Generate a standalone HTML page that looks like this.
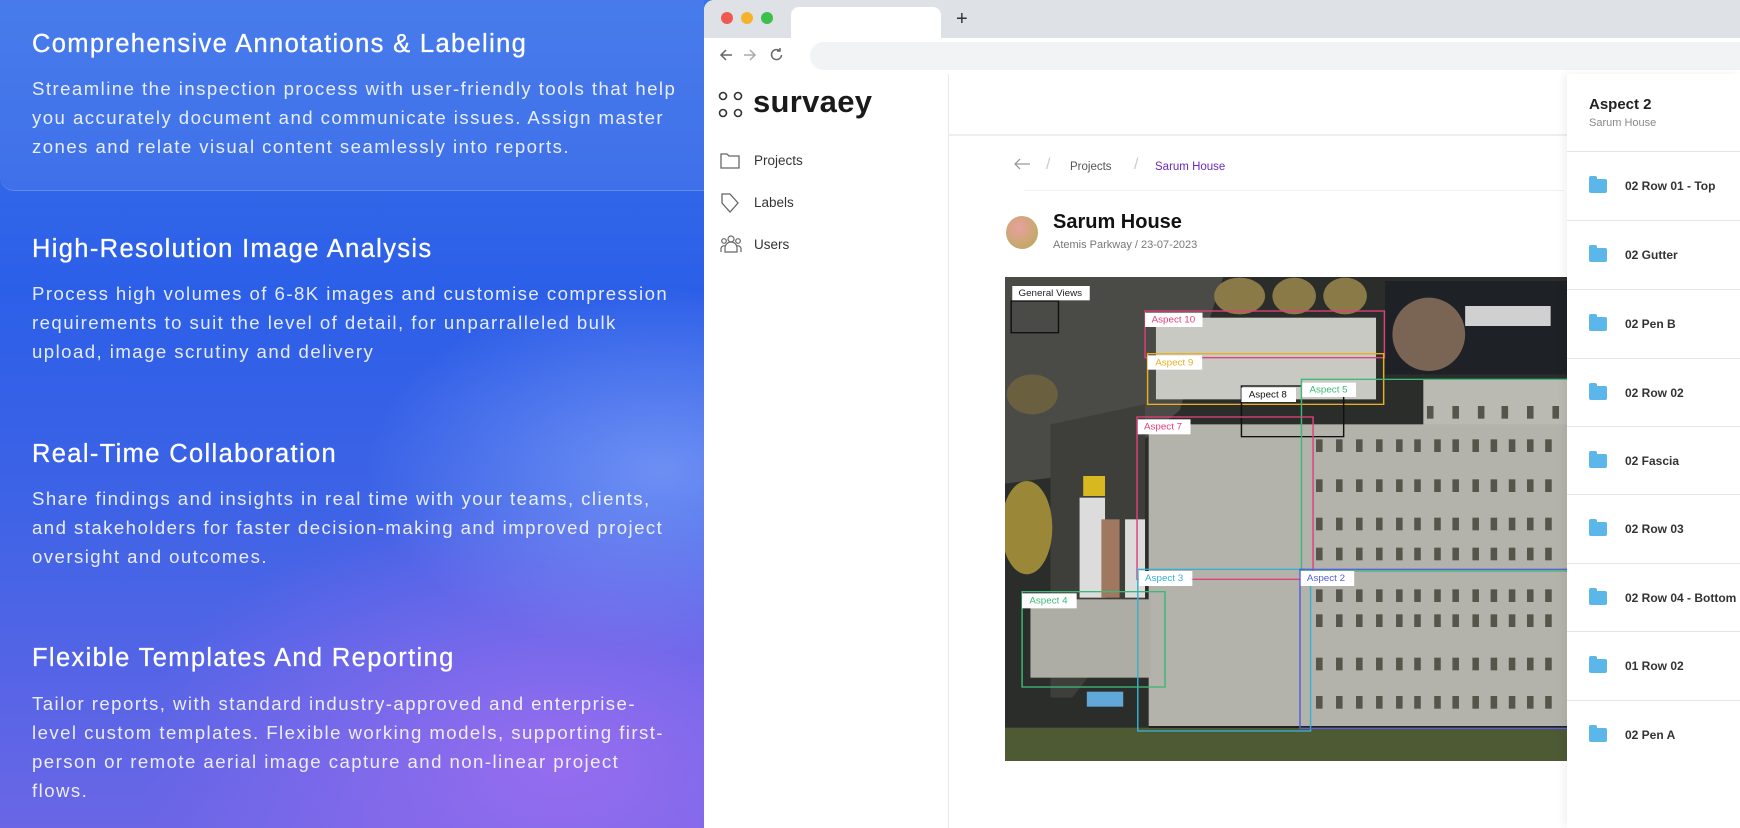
<!DOCTYPE html>
<html><head><meta charset="utf-8"><style>
*{margin:0;padding:0;box-sizing:border-box}
body{width:1740px;height:828px;overflow:hidden;position:relative;font-family:"Liberation Sans",sans-serif;background:#2d5fe6}
.left{position:absolute;left:0;top:0;width:720px;height:828px;
background:radial-gradient(ellipse 420px 260px at 660px 470px,rgba(150,180,255,.55),transparent 70%),
radial-gradient(ellipse 600px 380px at 560px 760px,rgba(160,110,240,.85),transparent 70%),
linear-gradient(180deg,#3a72ea 0%,#2c5fe8 35%,#3d63e6 60%,#6a66e6 100%)}
.card{position:absolute;left:0;top:0;width:704px;height:191px;background:rgba(255,255,255,.07);border-bottom:1px solid rgba(255,255,255,.18);border-bottom-left-radius:14px}
h2{position:absolute;left:32px;color:#fff;font-size:25.5px;font-weight:500;letter-spacing:1.35px;-webkit-text-stroke:.3px #fff}
p.b{position:absolute;left:32px;width:645px;color:rgba(255,255,255,.88);font-size:18.6px;line-height:29px;letter-spacing:1.45px}
.br{position:absolute;left:704px;top:0;width:1036px;height:828px;background:#fff;border-top-left-radius:10px;overflow:hidden}
.tabbar{position:absolute;left:0;top:0;right:0;height:38px;background:#dee1e6}
.tab{position:absolute;left:87px;top:7px;width:150px;height:34px;background:#fff;border-radius:8px 8px 0 0}
.dot{position:absolute;top:12px;width:12px;height:12px;border-radius:50%}
.addr{position:absolute;left:106px;top:42px;right:0;height:28px;background:#f1f3f4;border-radius:14px 0 0 14px}
.side{position:absolute;left:0;top:74px;width:245px;bottom:0;border-right:1px solid #e8e8e8}
.nav{position:absolute;left:50px;font-size:13.5px;color:#333}
.hdr{position:absolute;left:245px;top:74px;width:618px;height:62px;border-bottom:2px solid #eee}
.rp{position:absolute;left:863px;top:74px;width:173px;bottom:0;background:#fff;box-shadow:-3px 0 8px rgba(0,0,0,.06)}
.row{position:absolute;left:0;width:173px;height:69px;border-top:1px solid #e6e6e6;font-size:12px;font-weight:bold;color:#333}
.row span{position:absolute;left:58px;top:27px}
.fold{position:absolute;left:22px;top:27px;width:18px;height:14px;background:#5bb6ea;border-radius:2px}
.fold:before{content:"";position:absolute;left:0;top:-3px;width:8px;height:4px;background:#5bb6ea;border-radius:2px 2px 0 0}
</style></head><body>
<div class="left"></div>
<div class="card"></div>
<h2 style="top:30px">Comprehensive Annotations &amp; Labeling</h2>
<p class="b" style="top:74px">Streamline the inspection process with user-friendly tools that help you accurately document and communicate issues. Assign master zones and relate visual content seamlessly into reports.</p>
<h2 style="top:235px">High-Resolution Image Analysis</h2>
<p class="b" style="top:279px">Process high volumes of 6-8K images and customise compression requirements to suit the level of detail, for unparralleled bulk upload, image scrutiny and delivery</p>
<h2 style="top:440px">Real-Time Collaboration</h2>
<p class="b" style="top:484px">Share findings and insights in real time with your teams, clients, and stakeholders for faster decision-making and improved project oversight and outcomes.</p>
<h2 style="top:644px">Flexible Templates And Reporting</h2>
<p class="b" style="top:689px">Tailor reports, with standard industry-approved and enterprise-level custom templates. Flexible working models, supporting first-person or remote aerial image capture and non-linear project flows.</p>

<div class="br">
 <div class="tabbar"></div>
 <div class="dot" style="left:17px;background:#ee5a52"></div>
 <div class="dot" style="left:37px;background:#f4b32c"></div>
 <div class="dot" style="left:57px;background:#3cc04b"></div>
 <div class="tab"></div>
 <div style="position:absolute;left:252px;top:8px;font-size:20px;color:#333">+</div>
 <svg style="position:absolute;left:14px;top:46px" width="70" height="18" viewBox="0 0 70 18" fill="none" stroke="#666" stroke-width="1.5"><path d="M14 9H3M8 4L3 9l5 5"/><path d="M26 9h11M32 4l5 5-5 5" stroke="#aaa"/><path d="M62 5a5 5 0 1 0 1.5 4M62 2v3h-3"/></svg>
 <div class="addr"></div>
 <div class="side">
  <svg style="position:absolute;left:14px;top:17px" width="28" height="28" viewBox="0 0 28 28" fill="none" stroke="#333" stroke-width="1.6"><circle cx="5" cy="5" r="3.5"/><circle cx="20" cy="5" r="3.5"/><circle cx="5" cy="22" r="3.5"/><circle cx="20" cy="22" r="3.5"/></svg>
  <div style="position:absolute;left:49px;top:10px;font-size:31px;font-weight:bold;color:#1a1a1a;letter-spacing:.3px">survaey</div>
  <svg style="position:absolute;left:16px;top:77px" width="20" height="18" viewBox="0 0 20 18" fill="none" stroke="#666" stroke-width="1.3"><path d="M1 3h6l2 2h10v12H1z"/></svg>
  <div class="nav" style="top:79px">Projects</div>
  <svg style="position:absolute;left:16px;top:118px" width="20" height="22" viewBox="0 0 20 22" fill="none" stroke="#666" stroke-width="1.3"><path d="M2 2h8l8 9-8 9-8-9z"/></svg>
  <div class="nav" style="top:121px">Labels</div>
  <svg style="position:absolute;left:16px;top:161px" width="22" height="18" viewBox="0 0 22 18" fill="none" stroke="#666" stroke-width="1.2"><circle cx="11" cy="4" r="3"/><circle cx="4" cy="6" r="2.3"/><circle cx="18" cy="6" r="2.3"/><path d="M5 17v-4a6 6 0 0 1 12 0v4zM1 17v-3a3 3 0 0 1 4-3M21 17v-3a3 3 0 0 0-4-3"/></svg>
  <div class="nav" style="top:163px">Users</div>
 </div>
 <div class="hdr"></div>
 <svg style="position:absolute;left:308px;top:157px" width="20" height="14" viewBox="0 0 20 14" fill="none" stroke="#999" stroke-width="1.3"><path d="M18 7H3M8 2L3 7l5 5"/></svg>
 <div style="position:absolute;left:342px;top:156px;color:#ccc;font-size:16px">/</div>
 <div style="position:absolute;left:366px;top:161px;font-size:11.5px;color:#555">Projects</div>
 <div style="position:absolute;left:430px;top:156px;color:#ccc;font-size:16px">/</div>
 <div style="position:absolute;left:451px;top:161px;font-size:11.5px;color:#6a2ab8">Sarum House</div>
 <div style="position:absolute;left:320px;top:190px;width:540px;height:1px;background:#f0f0f0"></div>
 <div style="position:absolute;left:302px;top:216px;width:32px;height:33px;border-radius:50%;background:radial-gradient(circle at 40% 35%,#e8a0a0,#c9a870 60%,#b8a060)"></div>
 <div style="position:absolute;left:349px;top:211px;font-size:20px;font-weight:bold;color:#111">Sarum House</div>
 <div style="position:absolute;left:349px;top:239px;font-size:11px;color:#777">Atemis Parkway / 23-07-2023</div>
 <svg style="position:absolute;left:301px;top:277px" width="562" height="484" viewBox="15 18 1545 1452" preserveAspectRatio="none">
  <rect x="0" y="0" width="1600" height="1500" fill="#2b2d2a"/>
  <path d="M15 18h600l-120 400-200 180-280 40z" fill="#4a4a46"/>
  <path d="M140 460l260-60 0 600-200 280-60 0z" fill="#3e3e3a"/>
  <rect x="1060" y="30" width="500" height="280" fill="#1e2226"/>
  <ellipse cx="660" cy="75" rx="70" ry="55" fill="#8a7a48"/><ellipse cx="810" cy="75" rx="60" ry="55" fill="#8a7a48"/><ellipse cx="950" cy="75" rx="60" ry="55" fill="#8a7a48"/>
  <ellipse cx="1180" cy="190" rx="100" ry="110" fill="#7a6454"/>
  <rect x="1280" y="105" width="235" height="60" fill="#d0d0d0"/>
  <ellipse cx="75" cy="770" rx="70" ry="140" fill="#9a8838"/>
  <ellipse cx="90" cy="370" rx="70" ry="60" fill="#6a6040"/>
  <rect x="430" y="140" width="605" height="245" fill="#c9c9c4"/>
  <rect x="1165" y="325" width="395" height="140" fill="#bab9b2"/>
  <rect x="410" y="460" width="1150" height="905" fill="#b4b3ab"/>
  <rect x="85" y="985" width="330" height="235" fill="#aeada5"/>
  <rect x="220" y="680" width="70" height="300" fill="#dcdcdc"/><rect x="280" y="745" width="50" height="235" fill="#a07860"/><rect x="345" y="745" width="55" height="235" fill="#dcdcdc"/>
  <rect x="230" y="615" width="60" height="60" fill="#d8b820"/>
  <rect x="240" y="1262" width="100" height="45" fill="#60a8d8"/>
  <rect x="15" y="1370" width="1545" height="100" fill="#4e5a34"/>
  <g fill="#55554a">
   <rect x="1175" y="405" width="18" height="38"/><rect x="1245" y="405" width="18" height="38"/><rect x="1315" y="405" width="18" height="38"/><rect x="1380" y="405" width="18" height="38"/><rect x="1450" y="405" width="18" height="38"/><rect x="1520" y="405" width="18" height="38"/>
  </g>
  <g fill="#55554a" id="w">
   <rect x="870" y="505" width="18" height="38"/><rect x="925" y="505" width="18" height="38"/><rect x="980" y="505" width="18" height="38"/><rect x="1035" y="505" width="18" height="38"/><rect x="1090" y="505" width="18" height="38"/><rect x="1140" y="505" width="18" height="38"/><rect x="1195" y="505" width="18" height="38"/><rect x="1245" y="505" width="18" height="38"/><rect x="1300" y="505" width="18" height="38"/><rect x="1350" y="505" width="18" height="38"/><rect x="1400" y="505" width="18" height="38"/><rect x="1450" y="505" width="18" height="38"/><rect x="1500" y="505" width="18" height="38"/>
  </g>
  <use href="#w" y="120"/><use href="#w" y="235"/><use href="#w" y="325"/><use href="#w" y="450"/><use href="#w" y="525"/><use href="#w" y="655"/><use href="#w" y="770"/>
  <rect x="410" y="1365" width="1150" height="6" fill="#222"/>
  <g fill="none" stroke-width="4">
   <rect x="32" y="90" width="130" height="95" stroke="#111"/>
   <rect x="400" y="120" width="658" height="140" stroke="#e0407a"/>
   <rect x="407" y="248" width="649" height="152" stroke="#e8b020"/>
   <rect x="665" y="345" width="281" height="152" stroke="#111"/>
   <rect x="830" y="325" width="740" height="575" stroke="#3cb878"/>
   <rect x="378" y="438" width="484" height="487" stroke="#e0407a"/>
   <rect x="380" y="895" width="475" height="485" stroke="#38b0d0"/>
   <rect x="826" y="895" width="740" height="477" stroke="#5560e0"/>
   <rect x="62" y="962" width="393" height="286" stroke="#3cb878"/>
  </g>
  <g font-family="Liberation Sans,sans-serif" font-size="27">
   <rect x="35" y="45" width="213" height="43" fill="#fff"/><text x="52" y="75" fill="#222">General Views</text>
   <rect x="400" y="125" width="158" height="43" fill="#fff"/><text x="418" y="155" fill="#e0407a">Aspect 10</text>
   <rect x="407" y="253" width="150" height="43" fill="#fff"/><text x="428" y="283" fill="#e8b020">Aspect 9</text>
   <rect x="665" y="350" width="150" height="43" fill="#fff"/><text x="685" y="380" fill="#111">Aspect 8</text>
   <rect x="832" y="335" width="148" height="43" fill="#fff"/><text x="852" y="364" fill="#3cb878">Aspect 5</text>
   <rect x="380" y="445" width="145" height="45" fill="#fff"/><text x="397" y="475" fill="#e0407a">Aspect 7</text>
   <rect x="383" y="900" width="147" height="45" fill="#fff"/><text x="400" y="930" fill="#38b0d0">Aspect 3</text>
   <rect x="828" y="900" width="147" height="45" fill="#fff"/><text x="845" y="930" fill="#5560e0">Aspect 2</text>
   <rect x="62" y="967" width="150" height="45" fill="#fff"/><text x="82" y="997" fill="#3cb878">Aspect 4</text>
  </g>
 </svg>
 <div class="rp">
  <div style="position:absolute;left:22px;top:22px;font-size:15px;font-weight:bold;color:#222">Aspect 2</div>
  <div style="position:absolute;left:22px;top:43px;font-size:11px;color:#888">Sarum House</div>
  <div class="row" style="top:77px"><div class="fold"></div><span>02 Row 01 - Top</span></div>
  <div class="row" style="top:146px"><div class="fold"></div><span>02 Gutter</span></div>
  <div class="row" style="top:215px"><div class="fold"></div><span>02 Pen B</span></div>
  <div class="row" style="top:284px"><div class="fold"></div><span>02 Row 02</span></div>
  <div class="row" style="top:352px"><div class="fold"></div><span>02 Fascia</span></div>
  <div class="row" style="top:420px"><div class="fold"></div><span>02 Row 03</span></div>
  <div class="row" style="top:489px"><div class="fold"></div><span>02 Row 04 - Bottom</span></div>
  <div class="row" style="top:557px"><div class="fold"></div><span>01 Row 02</span></div>
  <div class="row" style="top:626px"><div class="fold"></div><span>02 Pen A</span></div>
 </div>
</div>
</body></html>
